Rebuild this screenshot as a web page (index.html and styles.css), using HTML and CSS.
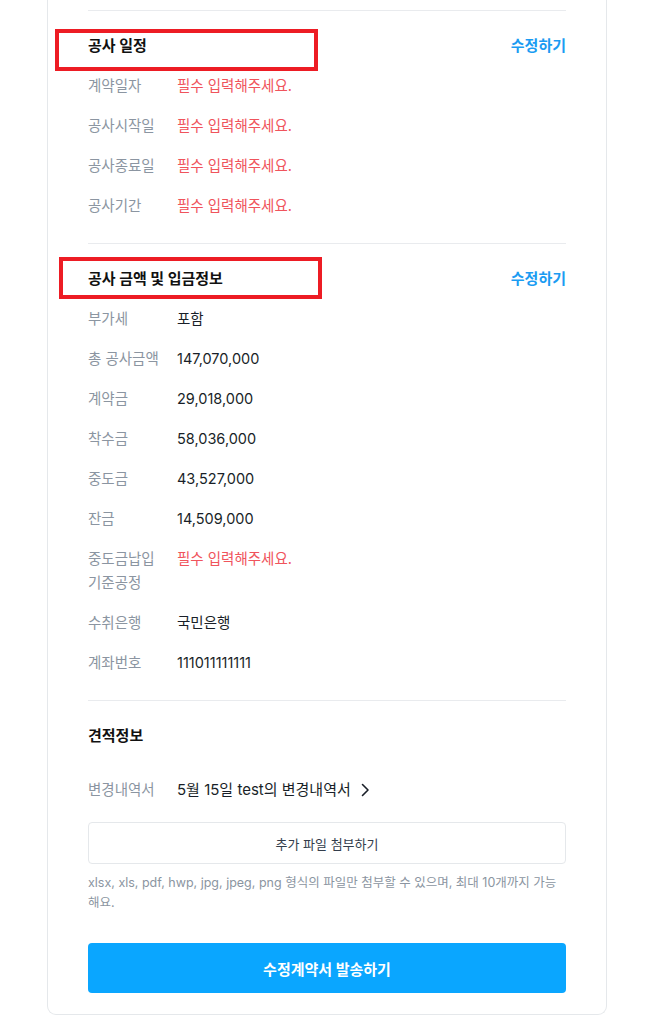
FILE: index.html
```html
<!DOCTYPE html>
<html lang="ko">
<head>
<meta charset="utf-8">
<title>수정계약서</title>
<link rel="stylesheet" href="styles.css">
</head>
<body>
<div class="page">
  <div class="card">
    <div class="divider"></div>
    <section class="section">
      <div class="sec-head">
        <h2 class="sec-title">공사 일정</h2>
        <a class="edit-link">수정하기</a>
      </div>
      <dl class="rows">
        <div class="row"><dt class="label">계약일자</dt><dd class="value required">필수 입력해주세요.</dd></div>
        <div class="row"><dt class="label">공사시작일</dt><dd class="value required">필수 입력해주세요.</dd></div>
        <div class="row"><dt class="label">공사종료일</dt><dd class="value required">필수 입력해주세요.</dd></div>
        <div class="row"><dt class="label">공사기간</dt><dd class="value required">필수 입력해주세요.</dd></div>
      </dl>
    </section>
    <div class="divider"></div>
    <section class="section">
      <div class="sec-head">
        <h2 class="sec-title">공사 금액 및 입금정보</h2>
        <a class="edit-link">수정하기</a>
      </div>
      <dl class="rows">
        <div class="row"><dt class="label">부가세</dt><dd class="value">포함</dd></div>
        <div class="row"><dt class="label">총 공사금액</dt><dd class="value">147,070,000</dd></div>
        <div class="row"><dt class="label">계약금</dt><dd class="value">29,018,000</dd></div>
        <div class="row"><dt class="label">착수금</dt><dd class="value">58,036,000</dd></div>
        <div class="row"><dt class="label">중도금</dt><dd class="value">43,527,000</dd></div>
        <div class="row"><dt class="label">잔금</dt><dd class="value">14,509,000</dd></div>
        <div class="row"><dt class="label">중도금납입 기준공정</dt><dd class="value required">필수 입력해주세요.</dd></div>
        <div class="row"><dt class="label">수취은행</dt><dd class="value">국민은행</dd></div>
        <div class="row"><dt class="label">계좌번호</dt><dd class="value">111011111111</dd></div>
      </dl>
    </section>
    <div class="divider"></div>
    <section class="section last">
      <h2 class="sec-title estimate-title">견적정보</h2>
      <div class="row">
        <span class="label">변경내역서</span>
        <a class="value doc-link">5월 15일 test의 변경내역서
          <svg class="chev" width="10" height="14" viewBox="0 0 10 14" aria-hidden="true"><path d="M2.5 1.5 L8 7 L2.5 12.5" fill="none" stroke="#191f28" stroke-width="1.6" stroke-linecap="round" stroke-linejoin="round"/></svg>
        </a>
      </div>
      <button class="attach-btn" type="button">추가 파일 첨부하기</button>
      <p class="help">xlsx, xls, pdf, hwp, jpg, jpeg, png 형식의 파일만 첨부할 수 있으며, 최대 10개까지 가능해요.</p>
      <button class="submit-btn" type="button">수정계약서 발송하기</button>
    </section>
  </div>
  <div class="mark mark-1"></div>
  <div class="mark mark-2"></div>
</div>
</body>
</html>
```

FILE: styles.css
```css
* { box-sizing: border-box; }
html, body { margin: 0; padding: 0; background: #fff; }
body {
  font-family: Inter, "Noto Sans CJK KR", sans-serif;
  color: #191f28;
  font-size: 14.5px;
  line-height: 24px;
  word-break: keep-all;
}
.page { position: relative; width: 653px; height: 1026px; overflow: hidden; }
.card {
  margin-left: 47px;
  width: 560px;
  border: 1px solid #e5e8eb;
  border-top: none;
  border-radius: 0 0 9px 9px;
  padding: 10px 40px 21px;
}
.divider { height: 1px; background: #e9ebee; }
.section { padding: 23px 0 25px; }
.section.last { padding-bottom: 0; }
.sec-head { display: flex; justify-content: space-between; align-items: center; margin-bottom: 16px; }
.sec-title { margin: 0; font-size: 15px; font-weight: 700; line-height: 24px; color: #111; }
.edit-link { font-size: 15px; font-weight: 700; color: #1b9cf2; }
.rows { margin: 0; display: flex; flex-direction: column; gap: 16px; }
.row { display: flex; align-items: flex-start; }
.label { width: 89px; flex: none; margin: 0; color: #8b95a1; font-size: 14.5px; line-height: 24px; }
.value { margin: 0; color: #191f28; font-size: 14.5px; line-height: 24px; }
.value.required { color: #f0545c; }
.estimate-title { margin-bottom: 30px; }
.doc-link { display: flex; align-items: center; gap: 9px; font-size: 15px; }
.chev { display: block; }
.attach-btn {
  display: block;
  width: 100%;
  height: 42px;
  margin-top: 20px;
  border: 1px solid #e5e8eb;
  border-radius: 4px;
  background: #fff;
  font-family: inherit;
  font-size: 13px;
  color: #333d4b;
}
.help { margin: 9px 0 0; font-size: 12.5px; line-height: 20px; color: #8b95a1; word-break: normal; }
.submit-btn {
  display: block;
  width: 100%;
  height: 50px;
  margin-top: 30px;
  border: none;
  border-radius: 4px;
  background: #0aa6ff;
  color: #fff;
  font-family: inherit;
  font-size: 15px;
  font-weight: 700;
}
.mark { position: absolute; border: 4px solid #ed1c24; width: 263px; height: 42px; }
.mark-1 { left: 55px; top: 29px; }
.mark-2 { left: 59px; top: 257px; }
```
